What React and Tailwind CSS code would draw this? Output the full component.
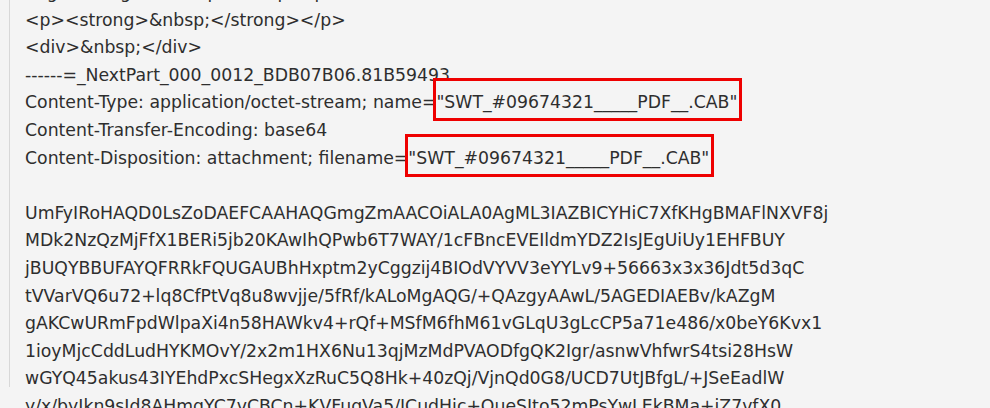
import React from 'react';

const header = [
  '<p><strong>&nbsp;</strong></p>',
  '<div>&nbsp;</div>',
  '------=_NextPart_000_0012_BDB07B06.81B59493',
];

const body = [
  'UmFyIRoHAQD0LsZoDAEFCAAHAQGmgZmAACOiALA0AgML3IAZBICYHiC7XfKHgBMAFlNXVF8j',
  'MDk2NzQzMjFfX1BERi5jb20KAwIhQPwb6T7WAY/1cFBncEVEIldmYDZ2IsJEgUiUy1EHFBUY',
  'jBUQYBBUFAYQFRRkFQUGAUBhHxptm2yCggzij4BIOdVYVV3eYYLv9+56663x3x36Jdt5d3qC',
  'tVVarVQ6u72+lq8CfPtVq8u8wvjje/5fRf/kALoMgAQG/+QAzgyAAwL/5AGEDIAEBv/kAZgM',
  'gAKCwURmFpdWlpaXi4n58HAWkv4+rQf+MSfM6fhM61vGLqU3gLcCP5a71e486/x0beY6Kvx1',
  '1ioyMjcCddLudHYKMOvY/2x2m1HX6Nu13qjMzMdPVAODfgQK2Igr/asnwVhfwrS4tsi28HsW',
  'wGYQ45akus43IYEhdPxcSHegxXzRuC5Q8Hk+40zQj/VjnQd0G8/UCD7UtJBfgL/+JSeEadlW',
  'y/x/byIkn9sJd8AHmqYC7vCBCn+KVFugVa5/ICudHic+QueSIto52mPsYwLEkBMa+iZ7vfX0',
];

const fileName = '"SWT_#09674321_____PDF__.CAB"';

const Boxed = ({ children }) => (
  <span className="relative">
    {children}
    <span className="absolute -left-[3px] -right-[5px] -top-[14px] -bottom-[9px] border-[3px] border-[#ee0000] pointer-events-none" />
  </span>
);

const Line = ({ children }) => (
  <div className="h-[27.6px] leading-[27.6px] whitespace-pre">{children}</div>
);

export default function App() {
  return (
    <div className="h-[408px] w-[990px] overflow-hidden bg-[#f4f4f4] pl-[9px]">
      <div
        className="h-full border-l border-[#d8d8d8] pl-[15px] text-[17.3px] text-[#2e2e2e]"
        style={{ fontFamily: '"DejaVu Sans", Verdana, sans-serif' }}
      >
        <div className="-mt-[21px]">
          <Line>
            {'Regards, signature <p>&nbsp;</p>'}
          </Line>
          {header.map((t) => (
            <Line key={t}>{t}</Line>
          ))}
          <Line>
            {'Content-Type: application/octet-stream; name='}
            <Boxed>{fileName}</Boxed>
          </Line>
          <Line>Content-Transfer-Encoding: base64</Line>
          <Line>
            {'Content-Disposition: attachment; filename='}
            <Boxed>{fileName}</Boxed>
          </Line>
          <Line>{' '}</Line>
          {body.map((t) => (
            <Line key={t}>{t}</Line>
          ))}
        </div>
      </div>
    </div>
  );
}
